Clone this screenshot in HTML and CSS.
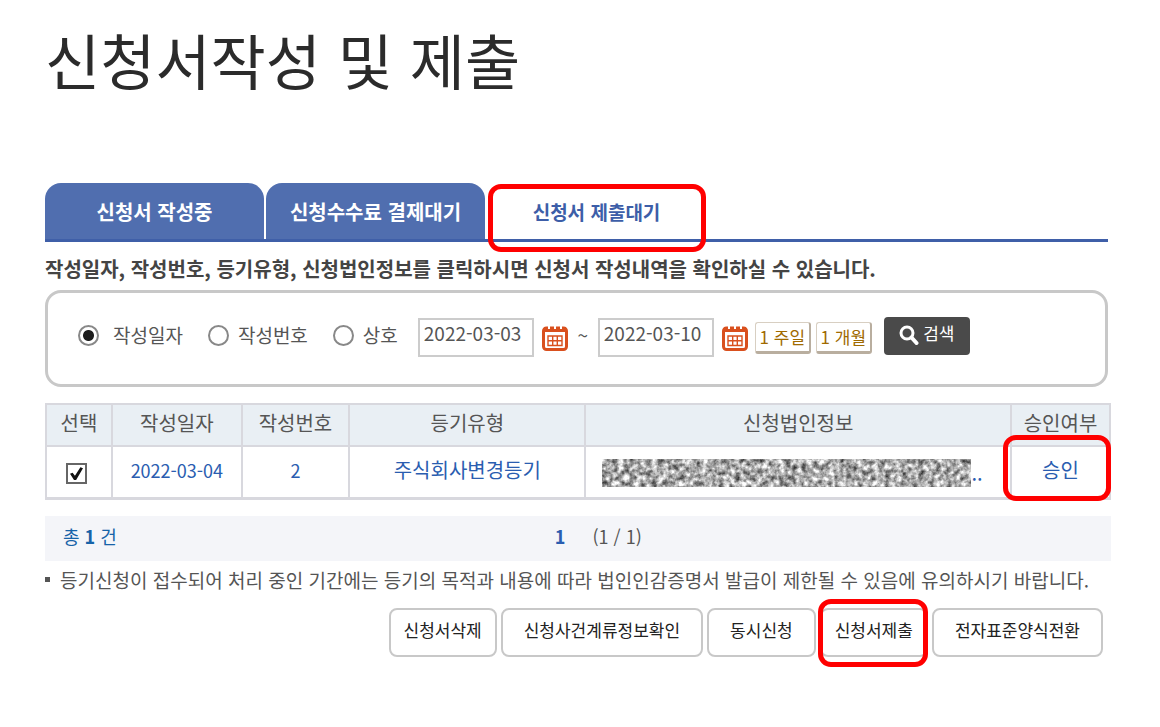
FILE: index.html
```html
<!DOCTYPE html>
<html lang="ko">
<head>
  <meta charset="UTF-8">
  <meta name="viewport" content="width=device-width, initial-scale=1.0">
  <title>신청서작성 및 제출</title>
  <link rel="stylesheet" href="styles.css">
</head>
<body>
  <main class="page">
    <h1 class="page-title">신청서작성 및 제출</h1>

    <nav class="tabs">
      <a class="tab" href="#">신청서 작성중</a>
      <a class="tab" href="#">신청수수료 결제대기</a>
      <a class="tab active marked" href="#">신청서 제출대기</a>
    </nav>

    <p class="guide">작성일자, 작성번호, 등기유형, 신청법인정보를 클릭하시면 신청서 작성내역을 확인하실 수 있습니다.</p>

    <form class="search-box">
      <div class="search-types">
        <label class="radio"><input type="radio" name="type" checked><span>작성일자</span></label>
        <label class="radio"><input type="radio" name="type"><span>작성번호</span></label>
        <label class="radio"><input type="radio" name="type"><span>상호</span></label>
      </div>
      <div class="period">
        <input class="date" type="text" value="2022-03-03" aria-label="시작일">
        <button class="cal-btn" type="button" aria-label="시작일 달력">
          <svg viewBox="0 0 26 26">
            <rect x="1.5" y="3" width="23" height="21.5" rx="3" fill="#fff" stroke="#d9501e" stroke-width="3"/>
            <path d="M2 2h22v5H2z" fill="#d9501e"/>
            <path d="M7 0v4M13 0v4M19 0v4" stroke="#fff" stroke-width="2"/>
            <path d="M6 11h14v9.500h-14zM6 15.700h14M10.700 11v9.500M15.300 11v9.500" fill="none" stroke="#d9501e" stroke-width="1.400"/>
          </svg>
        </button>
        <span class="tilde">~</span>
        <input class="date" type="text" value="2022-03-10" aria-label="종료일">
        <button class="cal-btn" type="button" aria-label="종료일 달력">
          <svg viewBox="0 0 26 26">
            <rect x="1.5" y="3" width="23" height="21.5" rx="3" fill="#fff" stroke="#d9501e" stroke-width="3"/>
            <path d="M2 2h22v5H2z" fill="#d9501e"/>
            <path d="M7 0v4M13 0v4M19 0v4" stroke="#fff" stroke-width="2"/>
            <path d="M6 11h14v9.500h-14zM6 15.700h14M10.700 11v9.500M15.300 11v9.500" fill="none" stroke="#d9501e" stroke-width="1.400"/>
          </svg>
        </button>
      </div>
      <div class="ranges">
        <button class="range-btn" type="button">1 주일</button>
        <button class="range-btn" type="button">1 개월</button>
      </div>
      <button class="search-btn" type="submit">
        <svg viewBox="0 0 20 20">
          <circle cx="8" cy="8" r="6" fill="none" stroke="#fff" stroke-width="3"/>
          <path d="M12.500 12.500L17.500 18" stroke="#fff" stroke-width="4" stroke-linecap="round"/>
        </svg>
        <span>검색</span>
      </button>
    </form>

    <table class="list">
      <colgroup>
        <col class="col-check">
        <col class="col-date">
        <col class="col-no">
        <col class="col-type">
        <col class="col-corp">
        <col class="col-state">
      </colgroup>
      <thead>
        <tr>
          <th>선택</th>
          <th>작성일자</th>
          <th>작성번호</th>
          <th>등기유형</th>
          <th>신청법인정보</th>
          <th>승인여부</th>
        </tr>
      </thead>
      <tbody>
        <tr>
          <td><input class="check" type="checkbox" checked aria-label="선택"></td>
          <td><a class="num" href="#">2022-03-04</a></td>
          <td><a class="num" href="#">2</a></td>
          <td><a href="#">주식회사변경등기</a></td>
          <td>
            <a class="corp" href="#">
              <svg class="noise" aria-hidden="true">
                <filter id="noise" x="0" y="0" width="100%" height="100%" color-interpolation-filters="sRGB">
                  <feTurbulence type="fractalNoise" baseFrequency="0.18" numOctaves="3" seed="4"/>
                  <feColorMatrix values="1.3 0 0 0 0.02  1.3 0 0 0 0.02  1.3 0 0 0 0.02  0 0 0 0 1"/>
                </filter>
                <rect width="100%" height="100%" filter="url(#noise)"/>
              </svg>
              <span>..</span>
            </a>
          </td>
          <td class="marked"><a href="#">승인</a></td>
        </tr>
      </tbody>
    </table>

    <div class="summary">
      <span class="total">총 <b>1</b> 건</span>
      <span class="paging"><a href="#">1</a><span>(1 / 1)</span></span>
    </div>

    <ul class="notes">
      <li>등기신청이 접수되어 처리 중인 기간에는 등기의 목적과 내용에 따라 법인인감증명서 발급이 제한될 수 있음에 유의하시기 바랍니다.</li>
    </ul>

    <div class="actions">
      <button class="action-btn narrow" type="button">신청서삭제</button>
      <button class="action-btn" type="button">신청사건계류정보확인</button>
      <button class="action-btn" type="button">동시신청</button>
      <button class="action-btn narrow marked" type="button">신청서제출</button>
      <button class="action-btn" type="button">전자표준양식전환</button>
    </div>
  </main>
</body>
</html>
```
FILE: styles.css
```css
:root {
  --blue: #506eaf;
  --line-blue: #3f5fa8;
  --link: #2a5db0;
  --text: #555;
  --border: #c8c8c8;
  --table-line: #d8d8de;
  --mark: #ff0000;
}

* {
  box-sizing: border-box;
  margin: 0;
  padding: 0;
}

body {
  font-family: "Noto Sans CJK KR", sans-serif;
  font-size: 19px;
  line-height: 28px;
  color: var(--text);
  background: #fff;
}

button,
input {
  font: inherit;
  color: inherit;
}

button {
  cursor: pointer;
}

a {
  color: var(--link);
  text-decoration: none;
}

.page {
  padding: 20px 49px 20px 45px;
}

.page-title {
  font-size: 60px;
  font-weight: 400;
  line-height: 78px;
  color: #2b2b2b;
}

/* red highlight frame */
.marked {
  position: relative;
}

.marked::after {
  content: "";
  position: absolute;
  inset: 0;
  border: 5px solid var(--mark);
  border-radius: 13px;
  pointer-events: none;
}

/* tabs */
.tabs {
  display: flex;
  gap: 2px;
  margin: 85px 3px 0 0;
  border-bottom: 3px solid var(--line-blue);
}

.tab {
  width: 219px;
  height: 56px;
  border-radius: 16px 16px 0 0;
  background: var(--blue);
  color: #fff;
  font-size: 20px;
  font-weight: 700;
  line-height: 58px;
  text-align: center;
}

.tab.active {
  background: #fff;
  color: #3d5ea8;
  font-size: 19px;
}

.tab.active::after {
  inset: 1px 0 -13px 1px;
}

.guide {
  margin-top: 13px;
  font-size: 20px;
  font-weight: 700;
  line-height: 28px;
  color: #444;
  white-space: nowrap;
}

/* search */
.search-box {
  display: flex;
  align-items: center;
  margin: 7px 3px 0 0;
  padding: 18px 30px 20px;
  height: 97px;
  border: 3px solid var(--border);
  border-radius: 16px;
}

.search-types {
  display: flex;
  gap: 25px;
  padding-bottom: 6px;
}

.radio {
  display: flex;
  align-items: center;
  gap: 14px;
}

.radio + .radio {
  gap: 9px;
}

.radio input {
  appearance: none;
  width: 21px;
  height: 21px;
  margin-top: 2px;
  border: 2px solid #888;
  border-radius: 50%;
  background: #fff;
}

.radio input:checked {
  background: radial-gradient(circle, #1c1c1c 5px, #fff 6px);
}

.period {
  display: flex;
  align-items: center;
  gap: 8px;
  margin-left: 20px;
}

.date {
  width: 116px;
  height: 39px;
  padding: 0 0 10px 4px;
  border: 2px solid #ccc;
  background: #fff;
}

.cal-btn {
  width: 26px;
  height: 26px;
  border: 0;
  background: none;
}

.cal-btn svg {
  display: block;
}

.tilde {
  width: 14px;
  padding-bottom: 6px;
  text-align: center;
}

.ranges {
  display: flex;
  gap: 5px;
  margin-left: 7px;
}

.range-btn {
  width: 56px;
  height: 32px;
  border: 1px solid #d8cfc2;
  border-right: 2px solid #b9ae9f;
  border-bottom: 3px solid #b9ae9f;
  border-radius: 3px;
  background: #fff;
  color: #a06a00;
  font-size: 17px;
  line-height: 26px;
  white-space: nowrap;
}

.search-btn {
  display: flex;
  justify-content: center;
  gap: 4px;
  width: 86px;
  height: 38px;
  margin: 0 0 4px 12px;
  padding-top: 4px;
  border: 0;
  border-radius: 4px;
  background: #4a4a4a;
  color: #fff;
  font-size: 17px;
  line-height: 24px;
}

.search-btn svg {
  width: 20px;
  height: 20px;
  margin-top: 4px;
}

/* list */
.list {
  width: 100%;
  margin-top: 16px;
  border-collapse: collapse;
  table-layout: fixed;
  border: 2px solid var(--table-line);
  border-bottom-width: 3px;
  font-size: 20px;
  text-align: center;
}

.col-check { width: 6.2%; }
.col-date { width: 12.2%; }
.col-no { width: 10.1%; }
.col-type { width: 22.2%; }
.col-corp { width: 40%; }
.col-state { width: 9.3%; }

.list th,
.list td {
  border: 2px solid var(--table-line);
  white-space: nowrap;
}

.list th {
  height: 42px;
  padding-bottom: 4px;
  background: #e9eff4;
  font-weight: 400;
}

.list td {
  height: 52px;
  padding-bottom: 4px;
}

.list td.marked::after {
  inset: -12px -2px -4px -9px;
}

.num {
  font-size: 18px;
}

.check {
  appearance: none;
  display: block;
  width: 21px;
  height: 21px;
  margin: 8px auto 0 19px;
  border: 2px solid #666;
  background: #fff;
}

.check:checked::before {
  content: "";
  display: block;
  width: 13px;
  height: 13px;
  margin: 2px;
  background: #111;
  clip-path: polygon(0 50%, 20% 42%, 38% 66%, 80% 0, 100% 8%, 46% 100%, 32% 100%);
}

.corp {
  display: flex;
  align-items: center;
  padding: 6px 0 0 16px;
}

.noise {
  flex: none;
  width: 369px;
  height: 28px;
}

/* summary */
.summary {
  display: grid;
  grid-template-columns: 46% 1fr;
  margin-top: 16px;
  padding: 6px 18px 11px;
  background: #f4f5f9;
  font-size: 18px;
}

.total {
  color: #1763a8;
}

.paging {
  display: flex;
  gap: 27px;
  padding-left: 18px;
}

.paging a {
  font-weight: 700;
}

/* notes */
.notes {
  margin-top: 5px;
  list-style: none;
}

.notes li {
  display: flex;
  align-items: center;
  gap: 10px;
  white-space: nowrap;
}

.notes li::before {
  content: "";
  width: 5px;
  height: 5px;
  background: #555;
}

/* buttons */
.actions {
  display: flex;
  justify-content: flex-end;
  gap: 4px;
  margin: 14px 8px 0 0;
}

.action-btn {
  height: 49px;
  padding: 0 21px 5px;
  border: 2px solid var(--border);
  border-radius: 8px;
  background: #fff;
  color: #222;
  font-size: 17px;
}

.action-btn.narrow {
  padding: 0 13px 5px;
}

.action-btn.marked::after {
  inset: -11px -2px -12px -4px;
}
```
